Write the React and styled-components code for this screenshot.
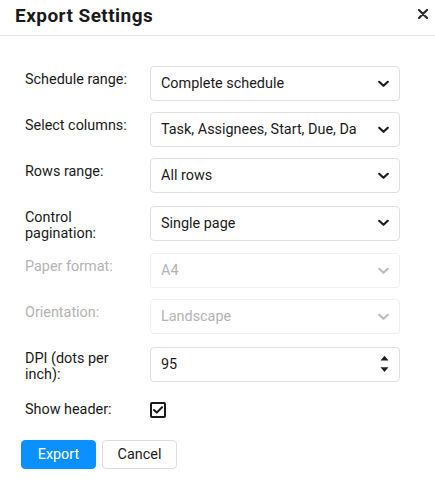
import React, { useState } from "react";
import styled, { createGlobalStyle } from "styled-components";

const GlobalStyle = createGlobalStyle`
  body {
    margin: 0;
    background: #ffffff;
    font-family: Roboto, "Noto Sans", sans-serif;
    color: #1f1f1f;
  }
  * { box-sizing: border-box; }
`;

const Dialog = styled.div`
  width: 435px;
  background: #ffffff;
`;

const Header = styled.div`
  display: flex;
  align-items: center;
  justify-content: space-between;
  height: 36px;
  padding: 5px 7px 9px 15px;
  border-bottom: 1px solid #e3e3e3;

  h2 {
    margin: 0;
    font-size: 19px;
    line-height: 21px;
    font-weight: 700;
    letter-spacing: 0.45px;
    color: #1a1a1a;
  }
`;

const CloseButton = styled.button`
  border: 0;
  background: none;
  padding: 0;
  width: 10px;
  height: 10px;
  margin-bottom: 3px;
  display: flex;
  cursor: pointer;
`;

const Body = styled.div`
  display: flex;
  flex-direction: column;
  gap: 11px;
  padding: 30px 35px 0 25px;
`;

const Row = styled.div`
  display: grid;
  grid-template-columns: 125px 250px;
  align-items: center;
  min-height: ${(p) => (p.$compact ? "32px" : "35px")};
`;

const Label = styled.label`
  align-self: ${(p) => (p.$center ? "center" : "start")};
  padding-top: ${(p) => (p.$center ? "0" : "6px")};
  padding-right: 10px;
  font-size: 14.4px;
  line-height: 16px;
  color: ${(p) => (p.$disabled ? "#b3b3b3" : "#1a1a1a")};
`;

const Field = styled.div`
  position: relative;
  height: 35px;
`;

const Select = styled.select`
  appearance: none;
  width: 100%;
  height: 35px;
  padding: 0 42px 0 10px;
  border: 1px solid ${(p) => (p.disabled ? "#efefef" : "#e0e0e0")};
  border-radius: 4px;
  background: #ffffff;
  font-family: Roboto, "Noto Sans", sans-serif;
  font-size: 14.4px;
  color: ${(p) => (p.disabled ? "#b3b3b3" : "#1a1a1a")};
  outline: none;
  opacity: 1;
`;

const NumberInput = styled.input`
  appearance: textfield;
  -moz-appearance: textfield;
  width: 100%;
  height: 35px;
  padding: 0 42px 0 10px;
  border: 1px solid #e0e0e0;
  border-radius: 4px;
  font-family: Roboto, "Noto Sans", sans-serif;
  font-size: 14.4px;
  color: #1a1a1a;
  outline: none;

  &::-webkit-inner-spin-button,
  &::-webkit-outer-spin-button {
    -webkit-appearance: none;
    margin: 0;
  }
`;

// icon that sits over the right end of a field
const FieldIcon = styled.span`
  position: absolute;
  right: 11px;
  top: 50%;
  transform: translateY(-50%);
  display: flex;
  pointer-events: none;
`;

const CheckBox = styled.span`
  width: 16px;
  height: 16px;
  border: 2px solid #1a1a1a;
  border-radius: 2px;
  display: flex;
  align-items: center;
  justify-content: center;
`;

const Footer = styled.div`
  display: flex;
  gap: 6px;
  padding: 14px 21px 11px;
`;

const Button = styled.button`
  height: 29px;
  width: 75px;
  border-radius: 4px;
  font-family: Roboto, "Noto Sans", sans-serif;
  font-size: 14.4px;
  cursor: pointer;
  border: 1px solid ${(p) => (p.$primary ? "#0a91ff" : "#dddddd")};
  background: ${(p) => (p.$primary ? "#0a91ff" : "#ffffff")};
  color: ${(p) => (p.$primary ? "#ffffff" : "#1a1a1a")};
`;

const Chevron = ({ disabled }) => (
  <svg width="11" height="7" viewBox="0 0 11 7">
    <polyline
      points="1.2,1.2 5.5,5.3 9.8,1.2"
      fill="none"
      stroke={disabled ? "#bdbdbd" : "#1f1f1f"}
      strokeWidth="2.2"
      strokeLinecap="round"
      strokeLinejoin="round"
    />
  </svg>
);

const SelectField = ({ value, options, disabled }) => (
  <Field>
    <Select defaultValue={value} disabled={disabled}>
      {options.map((o) => (
        <option key={o}>{o}</option>
      ))}
    </Select>
    <FieldIcon>
      <Chevron disabled={disabled} />
    </FieldIcon>
  </Field>
);

const App = () => {
  const [dpi, setDpi] = useState(95);

  return (
    <Dialog>
      <GlobalStyle />
      <Header>
        <h2>Export Settings</h2>
        <CloseButton aria-label="Close">
          <svg width="10" height="10" viewBox="0 0 10 10">
            <path d="M1 1L9 9M9 1L1 9" stroke="#2b2b2b" strokeWidth="2.2" strokeLinecap="round" />
          </svg>
        </CloseButton>
      </Header>

      <Body>
        <Row>
          <Label>Schedule range:</Label>
          <SelectField value="Complete schedule" options={["Complete schedule", "Date range"]} />
        </Row>
        <Row>
          <Label>Select columns:</Label>
          <SelectField
            value="Task, Assignees, Start, Due, Date"
            options={["Task, Assignees, Start, Due, Date"]}
          />
        </Row>
        <Row>
          <Label>Rows range:</Label>
          <SelectField value="All rows" options={["All rows", "Selected rows"]} />
        </Row>
        <Row>
          <Label>Control pagination:</Label>
          <SelectField value="Single page" options={["Single page", "Multiple pages"]} />
        </Row>
        <Row>
          <Label $disabled>Paper format:</Label>
          <SelectField value="A4" options={["A4", "A3", "Letter"]} disabled />
        </Row>
        <Row>
          <Label $disabled>Orientation:</Label>
          <SelectField value="Landscape" options={["Landscape", "Portrait"]} disabled />
        </Row>
        <Row>
          <Label>DPI (dots per inch):</Label>
          <Field>
            <NumberInput type="number" value={dpi} onChange={(e) => setDpi(e.target.value)} />
            <FieldIcon>
              <svg width="9" height="18" viewBox="0 0 9 18">
                <path d="M0.5 5.5L4.5 0.8L8.5 5.5Z" fill="#1f1f1f" />
                <path d="M0.5 12.3L4.5 17L8.5 12.3Z" fill="#1f1f1f" />
              </svg>
            </FieldIcon>
          </Field>
        </Row>
        <Row $compact>
          <Label $center>Show header:</Label>
          <CheckBox role="checkbox" aria-checked="true">
            <svg width="10" height="8" viewBox="0 0 10 8">
              <polyline
                points="1,4 3.8,6.6 9,1.2"
                fill="none"
                stroke="#1a1a1a"
                strokeWidth="2"
                strokeLinecap="round"
                strokeLinejoin="round"
              />
            </svg>
          </CheckBox>
        </Row>
      </Body>

      <Footer>
        <Button $primary>Export</Button>
        <Button>Cancel</Button>
      </Footer>
    </Dialog>
  );
};

export default App;
